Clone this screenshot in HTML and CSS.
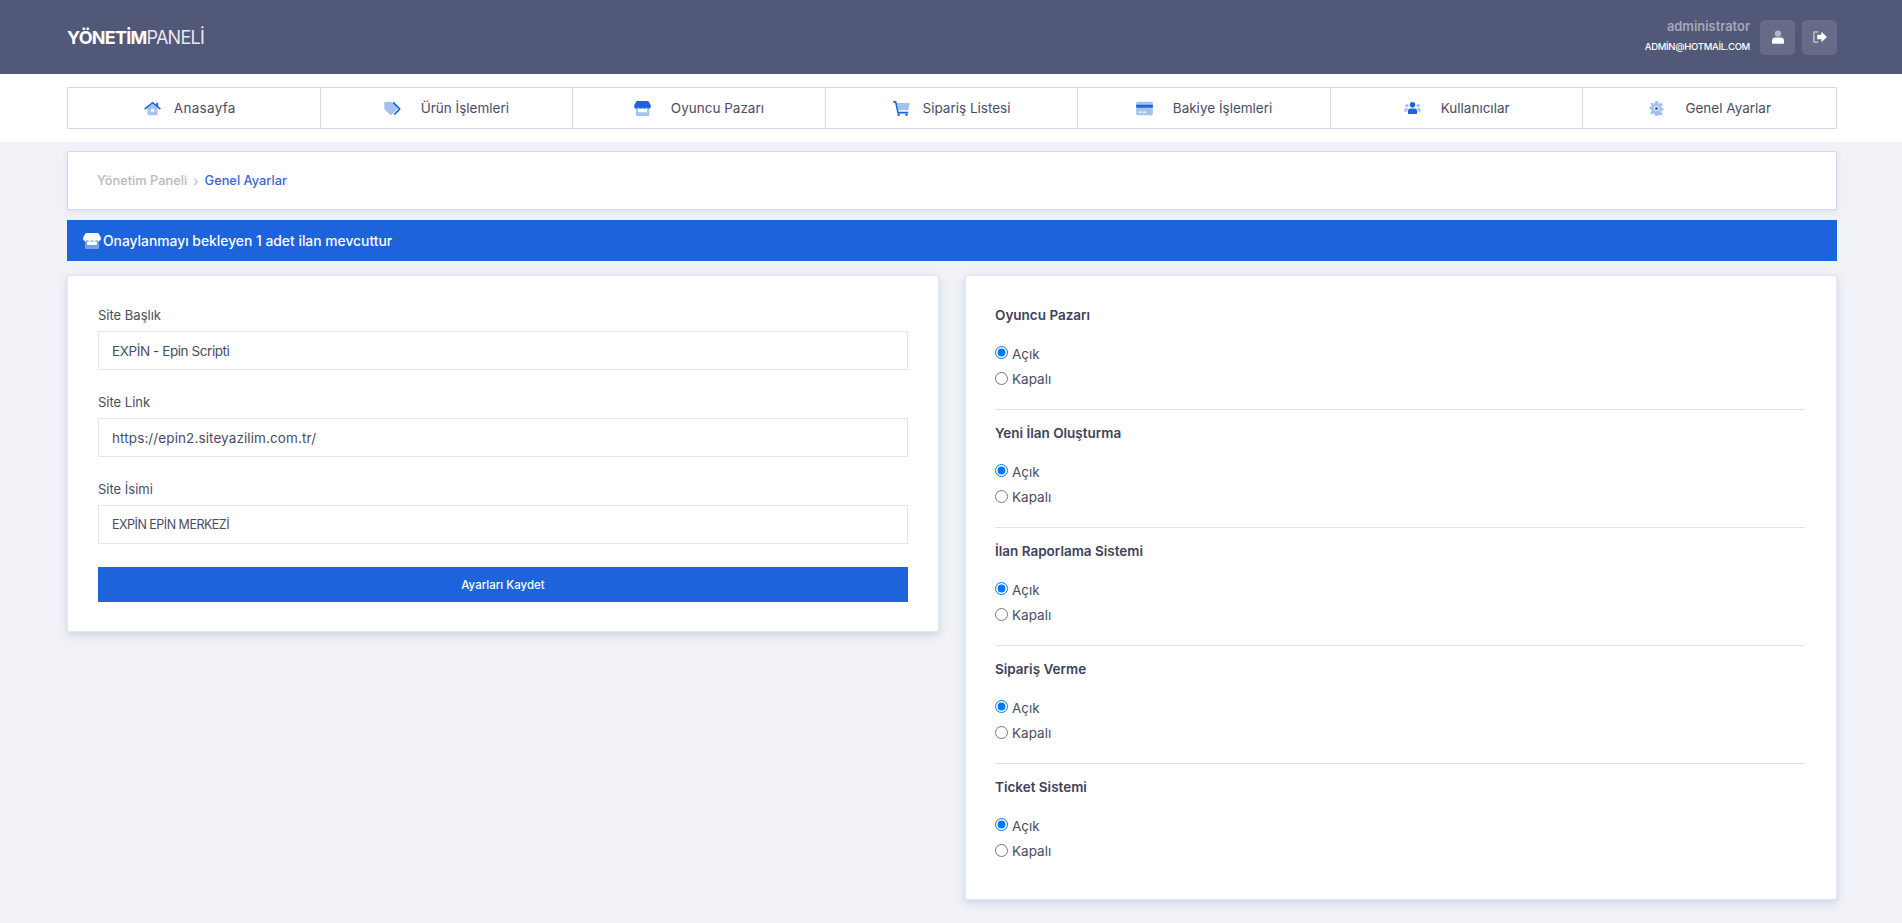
FILE: index.html
```html
<!DOCTYPE html>
<html lang="tr">
<head>
	<meta charset="UTF-8">
	<title>Genel Ayarlar</title>
	<link rel="stylesheet" href="styles.css">
</head>
<body>
	<svg class="defs" width="0" height="0">
		<symbol id="i-home" viewBox="0 0 20 18">
			<path class="soft" d="M4 8.5 10 3.5l6 5V17H4z"/>
			<path d="M10 .8 14.5 4.4V2h2.3v4.3L20 9l-1.2 1.4L10 3.2 1.2 10.4 0 9z"/>
			<path fill="#fff" d="M8 9.5h4V13H8z"/>
		</symbol>
		<symbol id="i-tags" viewBox="0 0 20 18">
			<path class="soft" d="M1.5 1H8a2 2 0 0 1 1.4.6l6 6a1.8 1.8 0 0 1 0 2.6l-6 6a1.8 1.8 0 0 1-2.6 0l-6-6A2 2 0 0 1 .2 8.8V2.300A1.300 1.300 0 0 1 1.500 1z"/>
			<path d="M11.500 1 19 8.300a1.800 1.800 0 0 1 0 2.500L12.800 17l-1.300-1.300L17.300 9.500 10 2.300z"/>
		</symbol>
		<symbol id="i-store" viewBox="0 0 20 18">
			<path class="soft" d="M2 8h16v8.500a1.500 1.500 0 0 1-1.500 1.500h-13A1.500 1.500 0 0 1 2 16.500z"/>
			<path fill="#fff" class="store-window" d="M4.500 9.500h11v4h-11z"/>
			<path d="M3.500 0h13a1 1 0 0 1 .9.5L20 5v1.500C20 8.200 18.800 9 17.500 9c-1 0-1.900-.5-2.500-1.200C14.400 8.500 13.500 9 12.500 9S10.600 8.500 10 7.800C9.400 8.500 8.500 9 7.500 9S5.600 8.500 5 7.800C4.400 8.500 3.500 9 2.500 9 1.200 9 0 8.200 0 6.500V5L2.600.5a1 1 0 0 1 .9-.5z"/>
		</symbol>
		<symbol id="i-cart" viewBox="0 0 20 18">
			<path class="soft" d="M4.500 2.500H20l-2 8.500H6.300z"/>
			<path d="M0 0h3.800l.5 2.500L6.600 13H18v2H5L2.300 2H0z"/>
			<circle cx="6.500" cy="16.500" r="1.500"/>
			<circle cx="16" cy="16.500" r="1.500"/>
		</symbol>
		<symbol id="i-card" viewBox="0 0 20 18">
			<path class="soft" d="M1.500 1h17A1.500 1.500 0 0 1 20 2.500v13a1.500 1.500 0 0 1-1.500 1.500h-17A1.500 1.500 0 0 1 0 15.500v-13A1.500 1.500 0 0 1 1.500 1z"/>
			<path d="M0 4.500h20v3.500H0z"/>
			<path fill="#fff" d="M3 12.500h3.500V14H3zM8 12.500h4V14H8z"/>
		</symbol>
		<symbol id="i-users" viewBox="0 0 20 18">
			<g class="soft">
				<circle cx="3.200" cy="5.500" r="2"/>
				<circle cx="16.800" cy="5.500" r="2"/>
				<path d="M0 12.500C0 10 1 8.500 3 8.500c1 0 1.500.3 2 .8-1 1-1.500 2-1.600 3.700zM20 12.500c0-2.500-1-4-3-4-1 0-1.500.3-2 .8 1 1 1.500 2 1.600 3.700z"/>
			</g>
			<circle cx="10" cy="4.500" r="3.300"/>
			<path d="M7.500 9h5c1.800 0 3 1.300 3 3.200v2.100c0 .6-.5 1.200-1.200 1.200H5.700c-.7 0-1.200-.6-1.200-1.200v-2.100C4.500 10.300 5.700 9 7.500 9z"/>
		</symbol>
		<symbol id="i-cog" viewBox="0 0 20 18">
			<path class="soft" d="M8.500 0h3l.5 2.500 1.500.7 2.300-1.200 1.800 2.500-1.800 1.800.3 1.500 2.300 1.200v2l-2.300 1-.3 1.500 1.800 1.800-1.800 2.500-2.300-1.200-1.500.7-.5 2.500h-3L8 15.800l-1.500-.7-2.300 1.200-1.800-2.500 1.800-1.800-.3-1.500-2.300-1v-2l2.300-1.200.3-1.500-1.800-1.800L4.200 2l2.300 1.200L8 2.500z"/>
			<circle fill="#fff" cx="10" cy="9" r="3"/>
			<circle cx="10" cy="9" r="1.800"/>
		</symbol>
	</svg>

	<header class="topbar">
		<div class="logo"><b>YÖNETİM</b>PANELİ</div>
		<div class="user-area">
			<div class="user-info">
				<span class="user-name">administrator</span>
				<span class="user-mail">ADMİN@HOTMAİL.COM</span>
			</div>
			<a class="user-btn" href="#">
				<svg width="12" height="14" viewBox="0 0 14 16"><circle class="soft-w" cx="7" cy="4" r="3.700"/><path fill="#fff" d="M3.500 8.500h7c2 0 3.500 1.500 3.500 3.500v2.500c0 .8-.7 1.500-1.500 1.500h-11C.7 16 0 15.300 0 14.500V12c0-2 1.500-3.500 3.500-3.500z"/></svg>
			</a>
			<a class="user-btn" href="#">
				<svg width="14" height="12" viewBox="0 0 15 13"><path class="soft-w" d="M2 0h3.500v1.800H2.500a.7.7 0 0 0-.7.7v8c0 .4.300.7.700.7h3V13H2a2 2 0 0 1-2-2V2a2 2 0 0 1 2-2z"/><path fill="#fff" d="M9 .8 15 6.500l-6 5.700V9H4.500V4H9z"/></svg>
			</a>
		</div>
	</header>

	<nav class="menu-wrap">
		<ul class="menu">
			<li class="menu-home"><svg class="menu-icon"><use href="#i-home"/></svg>Anasayfa</li>
			<li><svg class="menu-icon"><use href="#i-tags"/></svg>Ürün İşlemleri</li>
			<li><svg class="menu-icon"><use href="#i-store"/></svg>Oyuncu Pazarı</li>
			<li class="menu-tight"><svg class="menu-icon"><use href="#i-cart"/></svg>Sipariş Listesi</li>
			<li><svg class="menu-icon"><use href="#i-card"/></svg>Bakiye İşlemleri</li>
			<li><svg class="menu-icon"><use href="#i-users"/></svg>Kullanıcılar</li>
			<li><svg class="menu-icon"><use href="#i-cog"/></svg>Genel Ayarlar</li>
		</ul>
	</nav>

	<main class="content">
		<div class="crumbs">
			<span class="crumb-root">Yönetim Paneli</span>
			<span class="crumb-sep">›</span>
			<span class="crumb-now">Genel Ayarlar</span>
		</div>

		<div class="notice"><svg class="notice-icon"><use href="#i-store"/></svg>Onaylanmayı bekleyen 1 adet ilan mevcuttur</div>

		<div class="cols">
			<form class="card card-form">
				<label class="field-label">Site Başlık</label>
				<input class="field field-title" type="text" value="EXPİN - Epin Scripti">
				<label class="field-label">Site Link</label>
				<input class="field field-link" type="text" value="https://epin2.siteyazilim.com.tr/">
				<label class="field-label">Site İsimi</label>
				<input class="field field-caps" type="text" value="EXPİN EPİN MERKEZİ">
				<button class="save-btn" type="button">Ayarları Kaydet</button>
			</form>

			<form class="card card-opts">
				<div class="opt">
					<h4>Oyuncu Pazarı</h4>
					<label><input type="radio" name="o1" checked>Açık</label>
					<label><input type="radio" name="o1">Kapalı</label>
				</div>
				<div class="opt">
					<h4>Yeni İlan Oluşturma</h4>
					<label><input type="radio" name="o2" checked>Açık</label>
					<label><input type="radio" name="o2">Kapalı</label>
				</div>
				<div class="opt">
					<h4>İlan Raporlama Sistemi</h4>
					<label><input type="radio" name="o3" checked>Açık</label>
					<label><input type="radio" name="o3">Kapalı</label>
				</div>
				<div class="opt">
					<h4>Sipariş Verme</h4>
					<label><input type="radio" name="o4" checked>Açık</label>
					<label><input type="radio" name="o4">Kapalı</label>
				</div>
				<div class="opt">
					<h4>Ticket Sistemi</h4>
					<label><input type="radio" name="o5" checked>Açık</label>
					<label><input type="radio" name="o5">Kapalı</label>
				</div>
			</form>
		</div>
	</main>
</body>
</html>
```

FILE: styles.css
```css
*{margin: 0; padding: 0; box-sizing: border-box;}
ul, li{list-style: none;}
html, body{height: 100%;}
body{background: #f0f2f7; font-family: "Inter", "Noto Sans", sans-serif; font-size: 13px; color: #4a4c66;}
a{text-decoration: none;}

.defs{position: absolute;}
.soft{opacity: .4;}
.soft-w{fill: #fff; opacity: .5;}

.topbar{height: 74px; background: #525877; display: flex; align-items: center; justify-content: space-between; padding: 0 65px 0 67px;}
.logo{font-size: 18px; color: #e8e9ef; letter-spacing: -.75px;}
.logo b{font-weight: 700; color: #fff;}
.user-area{display: flex; align-items: center;}
.user-info{display: flex; flex-direction: column; align-items: flex-end; margin-right: 10px;}
.user-name{font-size: 12.9px; font-weight: 600; color: #a5a8ba; line-height: 20px;}
.user-mail{font-size: 9.5px; font-weight: 500; color: #fff; line-height: 20px; letter-spacing: -.3px;}
.user-btn{width: 35px; height: 35px; border-radius: 5px; background: #666c88; display: flex; align-items: center; justify-content: center; margin-left: 7px;}
.user-info + .user-btn{margin-left: 0;}

.menu-wrap{height: 68px; background: #fff; padding: 13px 65px 13px 67px;}
.menu{display: grid; grid-template-columns: repeat(7, 1fr); height: 42px; border: 1px solid #cfd9e8;}
.menu li{display: flex; align-items: center; justify-content: center; border-right: 1px solid #cfd9e8; font-size: 13.5px; color: #4a4c66;}
.menu li:last-child{border-right: 0;}
.menu-icon{width: 17px; height: 15px; margin-right: 20px; color: #1c63dc; fill: currentColor;}
.menu li.menu-home{padding-right: 8px; letter-spacing: .3px;}
.menu-home .menu-icon, .menu-tight .menu-icon{margin-right: 13px;}

.content{padding: 9px 65px 20px 67px;}
.crumbs{height: 59px; background: #fff; border: 1px solid #cfd9e8; box-shadow: 0 2px 6px rgba(80, 100, 150, .1); display: flex; align-items: center; padding-left: 29px; font-size: 12.8px; font-weight: 500;}
.crumb-root{color: #b8b8c4;}
.crumb-sep{color: #b8b8c4; margin: 0 6px; font-size: 14px; font-weight: 400;}
.crumb-now{color: #3767d6;}

.notice{height: 41px; margin-top: 10px; background: #1c63dc; color: #fff; font-size: 13.85px; font-weight: 500; display: flex; align-items: center; padding-left: 16px;}
.notice-icon{width: 18px; height: 16px; margin-right: 2px; color: #fff; fill: currentColor;}

.cols{display: grid; grid-template-columns: 1fr 1fr; gap: 26px; align-items: start; margin-top: 14px;}
.card{background: #fff; border-radius: 3px; border: 1px solid #e1e6f0; box-shadow: 0 3px 8px rgba(80, 100, 150, .22);}

.card-form{padding: 28px 30px 29px;}
.field-label{display: block; font-size: 13px; line-height: 22px; margin-bottom: 5px; color: #4a4c66;}
.field{display: block; width: 100%; height: 39px; border: 1px solid #e4e6ef; padding: 0 13px; font-family: inherit; font-size: 13.5px; color: #4a4c66; margin-bottom: 21px; outline: none;}
.field-title{letter-spacing: -.42px;}
.field-link{letter-spacing: .1px;}
.field-caps{font-size: 12.5px; letter-spacing: -.5px;}
.save-btn{display: block; width: 100%; height: 35px; margin-top: 23px; border: 0; background: #1c63dc; color: #fff; font-family: inherit; font-size: 11.5px; font-weight: 500;}

.card-opts{padding: 16px 31px 35px 29px;}
.opt{height: 118px; padding-top: 12px; border-bottom: 1px solid #e2e2e6;}
.opt:last-child{border-bottom: 0; height: auto;}
.opt h4{font-size: 13.5px; font-weight: 600; line-height: 22px; margin-bottom: 15px; color: #3f4159;}
.opt label{display: flex; align-items: center; height: 25.5px; font-size: 13.5px;}
.opt input{width: 13px; height: 13px; margin-right: 4px; margin-bottom: 2px; accent-color: #0075ff;}
```
